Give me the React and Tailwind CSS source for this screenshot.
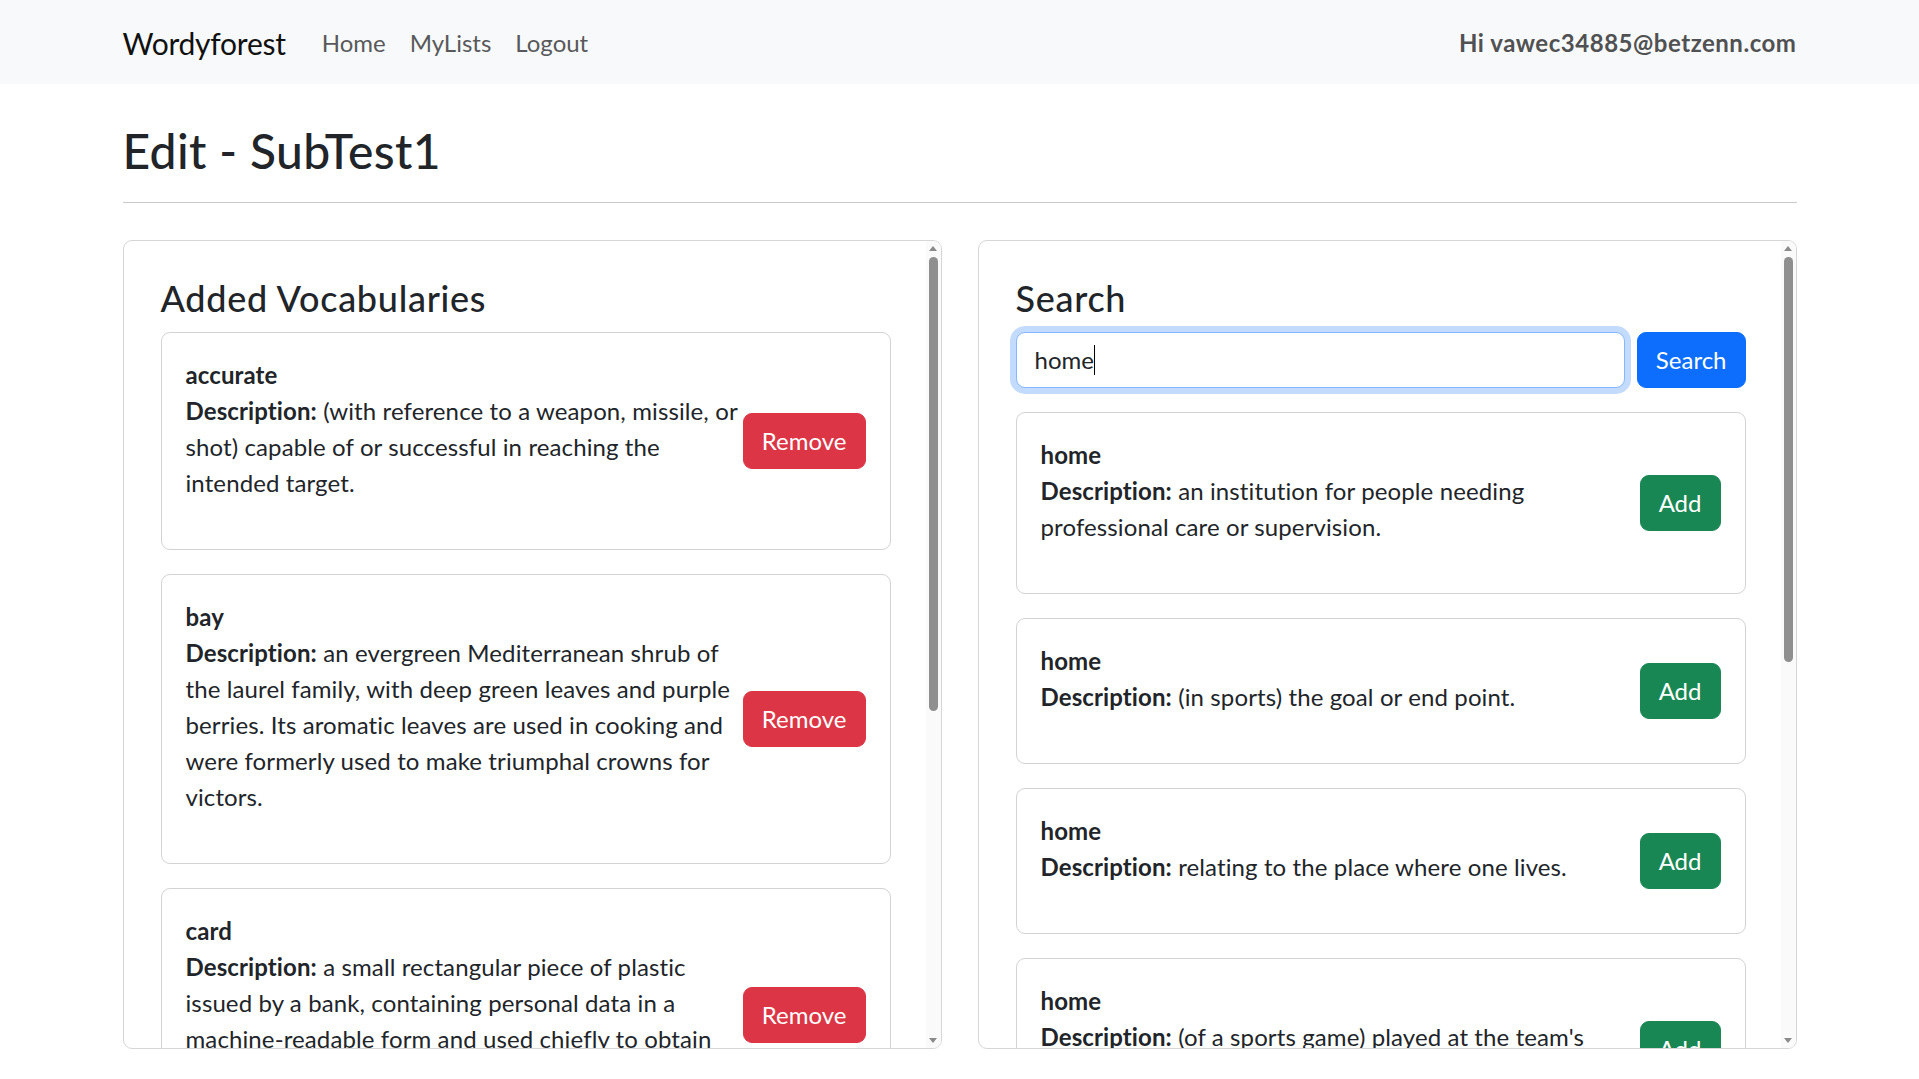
import React from "react";

function Scrollbar({ thumb }) {
  return (
    <div className="w-[15px] shrink-0 bg-[#fafafa] flex flex-col">
      <div className="h-[15px] flex items-center justify-center">
        <svg width="8" height="5" viewBox="0 0 8 5">
          <path d="M4 0 L8 5 L0 5 Z" fill="#8a8a8a" />
        </svg>
      </div>
      <div className="flex-1 flex justify-center pt-[1px]">
        <div className={"w-[9px] rounded-full bg-[#8f8f8f] " + thumb} />
      </div>
      <div className="h-[15px] flex items-center justify-center">
        <svg width="8" height="5" viewBox="0 0 8 5">
          <path d="M0 0 L8 0 L4 5 Z" fill="#8a8a8a" />
        </svg>
      </div>
    </div>
  );
}

function WordCard({ word, desc, action, danger }) {
  return (
    <div className="border border-[#d3d3d3] rounded-[9px] mb-[24px] bg-white">
      <div className="p-[24px] flex items-center">
        <div className="flex-1 min-w-0 tracking-[0.007em]">
          <div className="font-bold text-[24px] leading-[36px]">{word}</div>
          <p className="text-[24px] leading-[36px] mb-[24px]">
            <span className="font-bold">Description:</span> {desc}
          </p>
        </div>
        <button
          className={
            "shrink-0 text-white text-[24px] leading-[36px] px-[18px] py-[9px] rounded-[9px] border " +
            (danger
              ? "bg-[#dc3545] border-[#dc3545]"
              : "bg-[#198754] border-[#198754]")
          }
        >
          {action}
        </button>
      </div>
    </div>
  );
}

export default function App() {
  const added = [
    {
      word: "accurate",
      desc: "(with reference to a weapon, missile, or shot) capable of or successful in reaching the intended target.",
    },
    {
      word: "bay",
      desc: "an evergreen Mediterranean shrub of the laurel family, with deep green leaves and purple berries. Its aromatic leaves are used in cooking and were formerly used to make triumphal crowns for victors.",
    },
    {
      word: "card",
      desc: "a small rectangular piece of plastic issued by a bank, containing personal data in a machine-readable form and used chiefly to obtain cash or credit.",
    },
  ];
  const results = [
    { word: "home", desc: "an institution for people needing professional care or supervision." },
    { word: "home", desc: "(in sports) the goal or end point." },
    { word: "home", desc: "relating to the place where one lives." },
    { word: "home", desc: "(of a sports game) played at the team's own\u00a0ground." },
  ];

  return (
    <div className="min-h-screen bg-white text-[#212529] font-[family-name:Lato,'Noto_Sans',sans-serif]">
      <nav className="bg-[#f8f9fa] h-[84px] flex items-center pt-[2px]">
        <div className="w-[1674px] mx-auto flex items-center justify-between">
          <div className="flex items-center">
            <span className="text-[30px] leading-[45px] text-[#111] mr-[24px] tracking-[-0.008em]">Wordyforest</span>
            <a className="text-[24px] leading-[36px] text-[#58595a] px-[12px]">Home</a>
            <a className="text-[24px] leading-[36px] text-[#58595a] px-[12px]">MyLists</a>
            <a className="text-[24px] leading-[36px] text-[#58595a] px-[12px]">Logout</a>
          </div>
          <span className="text-[24px] leading-[36px] font-bold text-[#505152] tracking-[0.022em]">
            Hi vawec34885@betzenn.com
          </span>
        </div>
      </nav>

      <div className="w-[1674px] mx-auto pt-[38px]">
        <h2 className="text-[48px] leading-[58px] font-medium tracking-[0.008em]">Edit - SubTest1</h2>
        <hr className="mt-[22px] border-0 border-t border-[#c8c9ca]" />

        <div className="grid grid-cols-2 gap-[36px] mt-[37px]">
          <div className="h-[809px] border border-[#d6d6d6] rounded-[9px] overflow-hidden flex">
            <div className="flex-1 min-w-0 overflow-hidden pl-[37px] pr-[35px] pt-[36px]">
              <h4 className="text-[36px] leading-[43px] font-medium mb-[12px] tracking-[0.02em]">Added Vocabularies</h4>
              {added.map((a) => (
                <WordCard key={a.word} word={a.word} desc={a.desc} action="Remove" danger />
              ))}
            </div>
            <Scrollbar thumb="h-[454px]" />
          </div>

          <div className="h-[809px] border border-[#d6d6d6] rounded-[9px] overflow-hidden flex">
            <div className="flex-1 min-w-0 overflow-hidden pl-[37px] pr-[35px] pt-[36px]">
              <h4 className="text-[36px] leading-[43px] font-medium mb-[12px] tracking-[0.02em]">Search</h4>
              <div className="flex mb-[24px]">
                <div className="flex-1 mr-[12px] h-[56px] border border-[#86b7fe] rounded-[9px] shadow-[0_0_0_6px_rgba(13,110,253,0.25)] px-[18px] flex items-center bg-white">
                  <span className="text-[24px] leading-[36px]">home</span>
                  <span className="w-[1px] h-[30px] bg-black" />
                </div>
                <button className="shrink-0 bg-[#0d6efd] border border-[#0d6efd] text-white text-[24px] leading-[36px] px-[18px] py-[9px] rounded-[9px]">
                  Search
                </button>
              </div>
              {results.map((r, i) => (
                <WordCard key={i} word={r.word} desc={r.desc} action="Add" />
              ))}
            </div>
            <Scrollbar thumb="h-[405px]" />
          </div>
        </div>
      </div>
    </div>
  );
}
